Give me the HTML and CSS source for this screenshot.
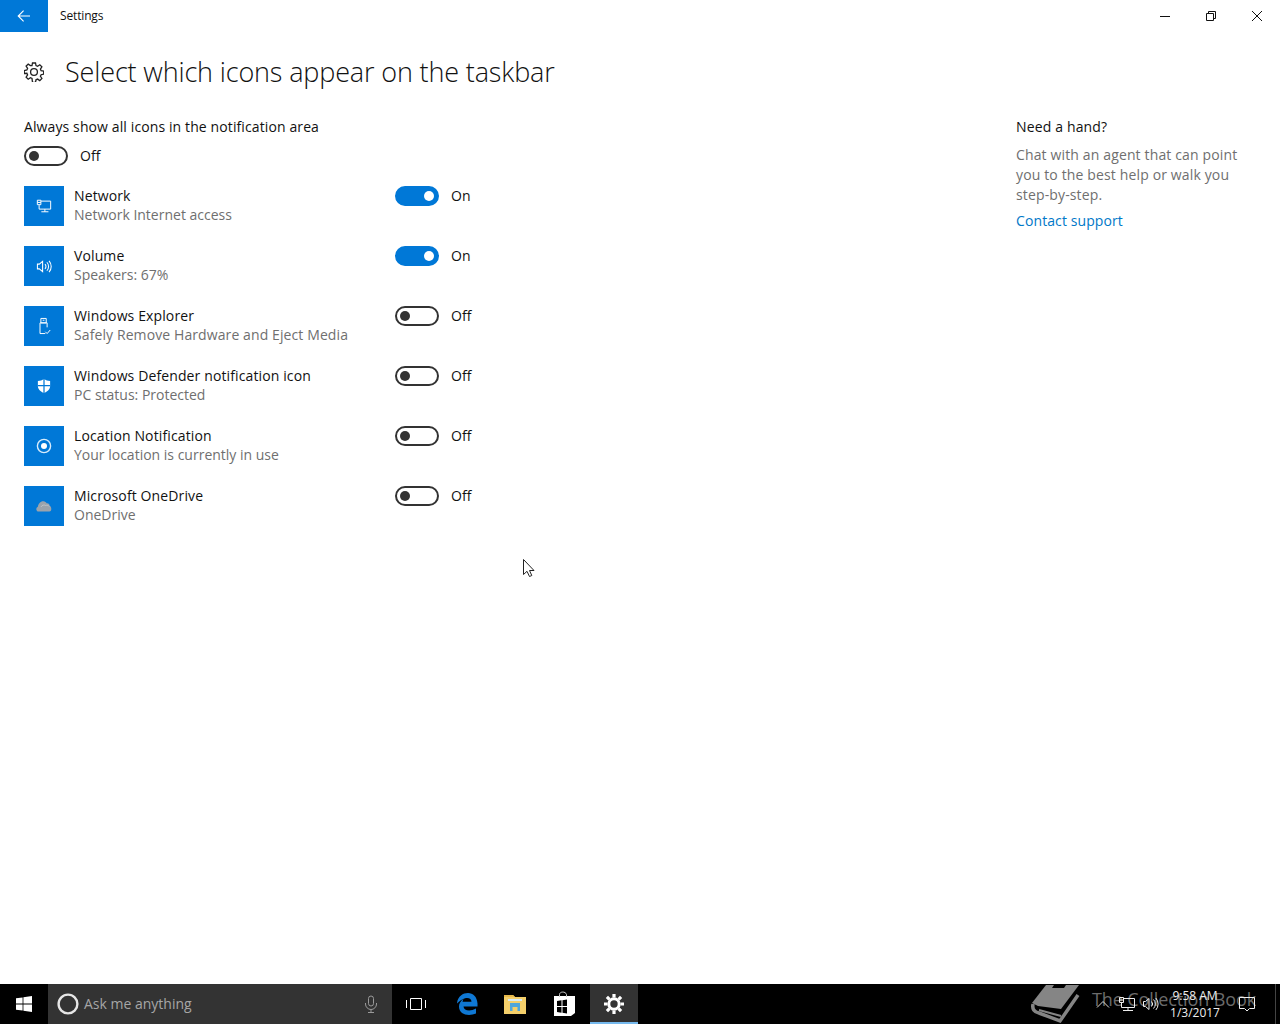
FILE: index.html
```html
<!DOCTYPE html>
<html lang="en">
<head>
<meta charset="utf-8">
<title>Settings</title>
<link rel="stylesheet" href="styles.css">
</head>
<body>
<div class="window">
  <header class="titlebar">
    <div class="back"><svg width="16" height="16" viewBox="0 0 16 16" fill="none" stroke="#fff" stroke-width="1.1"><path d="M14 8H2.2M7.6 2.600 2.200 8l5.400 5.400"/></svg></div>
    <div class="app-name">Settings</div>
    <div class="caption">
      <div class="cap-btn"><svg width="12" height="12" viewBox="0 0 12 12" fill="none" stroke="#111"><path d="M1 6.500h10"/></svg></div>
      <div class="cap-btn"><svg width="12" height="12" viewBox="0 0 12 12" fill="none" stroke="#111"><path d="M1.500 3.500h7v7h-7zM3.500 3.500v-2h7v7h-2"/></svg></div>
      <div class="cap-btn"><svg width="12" height="12" viewBox="0 0 12 12" fill="none" stroke="#111"><path d="M1 1l10 10M11 1 1 11"/></svg></div>
    </div>
  </header>

  <main class="content">
    <div class="page-head">
      <svg class="gear" width="20" height="20" viewBox="0 0 20 20" fill="none" stroke="#222" stroke-width="1.3"><path d="M8.500 1h3l.5 2.600 1.600.7 2.200-1.500 2.100 2.100-1.500 2.200.7 1.600 2.600.5v3l-2.600.5-.7 1.600 1.500 2.200-2.100 2.100-2.200-1.500-1.600.7-.5 2.600h-3L8 16.400l-1.600-.7-2.200 1.500-2.100-2.100 1.500-2.200-.7-1.600L.3 11.500v-3l2.600-.5.7-1.600-1.500-2.200 2.100-2.100 2.200 1.500L8 3.600z"/><circle cx="10" cy="10" r="3.400"/></svg>
      <h1 class="page-title">Select which icons appear on the taskbar</h1>
    </div>
    <div class="columns">
      <section class="settings">
        <div class="master-label">Always show all icons in the notification area</div>
        <div class="master-toggle"><span class="switch"></span><span class="state">Off</span></div>
        <div class="rows">
          <div class="row">
            <div class="tile"><svg width="16" height="16" viewBox="0 0 18 18" fill="none" stroke="#fff" stroke-width="1.100"><path d="M5.500 3.500h11v9h-13V8M10 12.500v3M6 15.500h8"/><path d="M1.500 2.500h4v5h-4zM1.500 5h4"/></svg></div>
            <div class="names"><div class="name">Network</div><div class="sub">Network Internet access</div></div>
            <div class="control"><span class="switch on"></span><span class="state">On</span></div>
          </div>
          <div class="row">
            <div class="tile"><svg width="17" height="17" viewBox="0 0 18 18" fill="none" stroke="#fff" stroke-width="1.100"><path d="M1.500 6.500h2l3.500-3v11l-3.500-3h-2zM9.500 6.500a3.500 3.500 0 0 1 0 5M11.500 4.500a6.500 6.500 0 0 1 0 9M13.800 3a9 9 0 0 1 0 12"/></svg></div>
            <div class="names"><div class="name">Volume</div><div class="sub">Speakers: 67%</div></div>
            <div class="control"><span class="switch on"></span><span class="state">On</span></div>
          </div>
          <div class="row">
            <div class="tile"><svg width="16" height="18" viewBox="0 0 18 20" fill="none" stroke="#fff" stroke-width="1.100"><path d="M5.500 1.500h6v5h-6zM4.500 6.500h8v5M4.500 6.500v12h6M10.500 16.500l2 2 3.500-4"/><path d="M7.500 3.500h2"/></svg></div>
            <div class="names"><div class="name">Windows Explorer</div><div class="sub sub-wide">Safely Remove Hardware and Eject Media</div></div>
            <div class="control"><span class="switch"></span><span class="state">Off</span></div>
          </div>
          <div class="row">
            <div class="tile"><svg width="14" height="16" viewBox="0 0 16 18"><path fill="#fff" d="M8 1c2 1.400 4.300 2.200 7 2.300V9c0 3.600-3 6.600-7 8-4-1.400-7-4.400-7-8V3.300C3.700 3.200 6 2.400 8 1z"/><path stroke="#0078d7" stroke-width="1.400" d="M8 1v16M1 8.500h14"/></svg></div>
            <div class="names"><div class="name">Windows Defender notification icon</div><div class="sub">PC status: Protected</div></div>
            <div class="control"><span class="switch"></span><span class="state">Off</span></div>
          </div>
          <div class="row">
            <div class="tile"><svg width="16" height="16" viewBox="0 0 16 16" fill="none" stroke="#d8ecfb" stroke-width="1.400"><circle cx="8" cy="8" r="6.600"/><circle cx="8" cy="8" r="3" fill="#fff" stroke="none"/></svg></div>
            <div class="names"><div class="name">Location Notification</div><div class="sub">Your location is currently in use</div></div>
            <div class="control"><span class="switch"></span><span class="state">Off</span></div>
          </div>
          <div class="row">
            <div class="tile"><svg width="16" height="12" viewBox="0 0 16 12"><path fill="#9ba3ab" d="M2.500 11.500C0 11.500-.5 7.800 1.800 7 2.300 3.500 4.500 1 7.500 1.200c1.500.1 2.600.9 3.100 2.100 1.800-.3 3 .8 3.100 2.500 2 .6 2.300 5.700-.2 5.700z"/><path fill="none" stroke="#c4c8cc" stroke-width=".8" d="M5 7c1-2 3-2.500 4.500-1.500 1.500-.5 3-.2 3.800 1"/></svg></div>
            <div class="names"><div class="name">Microsoft OneDrive</div><div class="sub">OneDrive</div></div>
            <div class="control"><span class="switch"></span><span class="state">Off</span></div>
          </div>
        </div>
      </section>
      <aside class="help">
        <div class="help-title">Need a hand?</div>
        <p class="help-text">Chat with an agent that can point you to the best help or walk you step-by-step.</p>
        <div class="help-link">Contact support</div>
      </aside>
    </div>
    <svg class="cursor" width="14" height="20" viewBox="0 0 14 20"><path fill="#fff" stroke="#222" d="M1.500 1.500v15l3.500-3.200 2.500 5.200 2.300-1-2.300-5h4.500z"/></svg>
  </main>

  <footer class="taskbar">
    <div class="start"><svg width="16" height="16" viewBox="0 0 16 16" fill="#fff"><path d="M0 2.300 6.600 1.400v6.200H0zM7.400 1.300 16 0v7.600H7.400zM0 8.400h6.600v6.200L0 13.700zM7.400 8.400H16V16l-8.600-1.300z"/></svg></div>
    <div class="search">
      <svg width="22" height="22" viewBox="0 0 22 22" fill="none" stroke="#e6e6e6" stroke-width="2.400"><circle cx="11" cy="11" r="9.400"/></svg>
      <span class="search-text">Ask me anything</span>
      <svg class="mic" width="14" height="18" viewBox="0 0 14 18" fill="none" stroke="#9a9a9a"><rect x="4.500" y="1" width="5" height="10" rx="2.500"/><path d="M1.500 8v1a5.500 5.500 0 0 0 11 0V8M7 14.500v3M4 17.500h6"/></svg>
    </div>
    <div class="task-btn"><svg width="20" height="14" viewBox="0 0 20 14" fill="none" stroke="#fff"><path d="M4.500 1.500h11v11h-11zM.5 3v8M19.500 3v8"/></svg></div>
    <div class="task-btn edge"><svg width="22" height="24" viewBox="0 0 22 24"><path fill="#0f78d4" d="M1 11C2 4 7 1 12 1c5 0 9 3.500 9.500 10.500v3H7.500c.3 4.500 7 5.200 12.500 2v5c-7 3-17 1.500-17-7 0-3 1.500-5.500 4.500-7.500-.5 1-.8 1.800-1 2.800h9c0-4.500-6.500-6.500-14.500 1.700z"/></svg></div>
    <div class="task-btn"><svg width="22" height="20" viewBox="0 0 22 20"><path fill="#f4cf6a" d="M0 1h9l2 2h11v17H0z"/><path fill="#e6b84a" d="M0 1h9l2 2H0z"/><path fill="#4fa6dc" d="M6 9h10v8h-2.500v-4h-5v4H6z"/><path fill="#d7eaf5" d="M4 5h14v2H4z"/></svg></div>
    <div class="task-btn store"><svg width="21" height="26" viewBox="0 0 21 26"><path fill="#fff" d="M0 5h21v17l-4 3H0z"/><path fill="none" stroke="#ccc" d="M5.500 6V3.500c0-3 6-3.500 7 0V6"/><path fill="#000" d="M3 10l4.500-.7V15H3zM8.500 9.200 13 8.500V15H8.500zM3 16h4.500v5.700L3 21zM8.500 16H13v6.500l-4.500-.7z"/></svg></div>
    <div class="task-btn active"><svg width="20" height="20" viewBox="0 0 20 20" fill="none" stroke="#fff" stroke-width="3"><circle cx="10" cy="10" r="5.200"/><path stroke-width="3.200" d="M10 0v3.500M10 16.500V20M0 10h3.500M16.500 10H20M2.900 2.900l2.500 2.500M14.600 14.600l2.500 2.500M2.900 17.100l2.500-2.500M14.600 5.400l2.500-2.500"/></svg></div>
    <div class="tray">
      <svg class="tray-chev" width="14" height="8" viewBox="0 0 14 8" fill="none" stroke="#ddd"><path d="M1 7.500l6-6 6 6"/></svg>
      <svg class="tray-icon" width="18" height="18" viewBox="0 0 18 18" fill="none" stroke="#eee"><path d="M5.500 3.500h11v9h-13V8M10 12.500v3M5 15.500h10"/><path d="M1.500 2.500h4v5h-4zM1.500 5h4"/></svg>
      <svg class="tray-icon" width="18" height="18" viewBox="0 0 18 18" fill="none" stroke="#eee"><path d="M1.500 6.500h2l3.500-3v11l-3.500-3h-2zM9.500 6.500a3.500 3.500 0 0 1 0 5M11.500 4.500a6.500 6.500 0 0 1 0 9M13.800 3a9 9 0 0 1 0 12"/></svg>
      <div class="clock"><div>9:58 AM</div><div>1/3/2017</div></div>
      <svg class="action" width="18" height="18" viewBox="0 0 18 18" fill="none" stroke="#eee"><path d="M1.500 2.500h15v11h-5L9 16l-2.500-2.500h-5z"/></svg>
      <div class="desk-line"></div>
    </div>
    <div class="watermark">
      <svg width="52" height="40" viewBox="0 0 52 40"><path fill="#858585" d="M2 19 16 1h33L31 25 8 22z"/><path fill="#000" d="M24 1h12l-2 3H22z"/><path fill="none" stroke="#858585" stroke-width="3.500" d="M3 20c-1 5 1 8 6 9l21 8 18-26"/><path fill="none" stroke="#858585" stroke-width="2" d="M9 26l22 6"/></svg>
      <span class="wm-text">The Collection Book</span>
    </div>
  </footer>
</div>
</body>
</html>
```

FILE: styles.css
```css
* { box-sizing: border-box; }
html, body { margin: 0; padding: 0; }
body {
  font-family: "Open Sans", "Noto Sans", "Liberation Sans", sans-serif;
  color: #000;
  background: #fff;
  overflow: hidden;
}
.window { width: 1280px; height: 1024px; display: flex; flex-direction: column; }

.titlebar { height: 32px; display: flex; align-items: center; flex: none; }
.back { width: 48px; height: 32px; background: #0078d7; display: flex; align-items: center; justify-content: center; }
.app-name { margin: -2px 0 0 12px; font-size: 12px; color: #111; letter-spacing: -0.15px; }
.caption { margin-left: auto; display: flex; }
.cap-btn { width: 46px; height: 32px; display: flex; align-items: center; justify-content: center; }

.content { flex: 1; position: relative; padding: 0 24px; min-height: 0; }
.page-head { display: flex; align-items: center; height: 80px; }
.gear { flex: none; }
.page-title { margin: -2px 0 0 21px; font-size: 27px; font-weight: 300; color: #111; white-space: nowrap; letter-spacing: -0.15px; }

.columns { display: flex; justify-content: space-between; }
.settings { width: 600px; }
.master-label { font-size: 14px; line-height: 20px; height: 20px; margin-top: 5px; color: #111; letter-spacing: 0.11px; }
.master-toggle { display: flex; align-items: center; margin-top: 9px; height: 20px; }
.master-toggle .state { margin-left: 12px; }
.rows { margin-top: 20px; display: flex; flex-direction: column; gap: 20px; }
.row { display: flex; height: 40px; }
.tile { width: 40px; height: 40px; background: #0078d7; display: flex; align-items: center; justify-content: center; flex: none; }
.names { width: 321px; margin-left: 10px; }
.name { font-size: 14px; line-height: 19px; color: #111; white-space: nowrap; letter-spacing: 0.12px; }
.sub { font-size: 14px; line-height: 19px; color: #6f6f6f; white-space: nowrap; }
.sub-wide { letter-spacing: 0.1px; }
.control { display: flex; align-items: center; height: 20px; }
.state { margin: -2px 0 0 12px; font-size: 14px; color: #111; }
.switch { display: block; position: relative; width: 44px; height: 20px; border: 2px solid #333; border-radius: 10px; flex: none; }
.switch::after { content: ""; position: absolute; left: 3px; top: 3px; width: 10px; height: 10px; border-radius: 50%; background: #333; }
.switch.on { background: #0078d7; border-color: #0078d7; }
.switch.on::after { left: auto; right: 3px; background: #fff; }

.help { width: 240px; margin-right: 0; }
.help-title { font-size: 14px; line-height: 20px; margin-top: 5px; color: #111; letter-spacing: 0.15px; }
.help-text { margin: 8px 0 0; font-size: 14px; line-height: 20px; color: #6f6f6f; letter-spacing: 0.14px; }
.help-link { margin-top: 6px; font-size: 14px; line-height: 20px; color: #0078c8; letter-spacing: 0.1px; }

.cursor { position: absolute; left: 522px; top: 526px; }

.taskbar { height: 40px; flex: none; background: #000; display: flex; position: relative; color: #fff; }
.start { width: 48px; display: flex; align-items: center; justify-content: center; }
.search { width: 344px; background: #333; display: flex; align-items: center; padding: 0 14px 0 9px; }
.search-text { margin: -2px 0 0 5px; font-size: 14px; color: #a6a6a6; }
.mic { margin-left: auto; }
.task-btn { width: 48px; height: 40px; display: flex; align-items: center; justify-content: center; }
.task-btn.edge { margin-left: 3px; }
.task-btn.store { margin-left: 1px; }
.task-btn.active { background: #333; border-bottom: 2px solid #76b9ed; margin-left: 2px; padding-top: 2px; }
.tray { margin-left: auto; display: flex; align-items: center; position: relative; z-index: 1; }
.tray-chev { margin-right: 8px; }
.tray-icon { margin-right: 6px; }
.tray-icon + .tray-icon { margin-right: -1px; }
.clock { width: 72px; text-align: center; font-size: 12px; line-height: 17px; color: #eee; white-space: nowrap; }
.action { margin: 0 24px 0 7px; }
.desk-line { width: 1px; height: 40px; background: #444; position: absolute; right: 4px; top: 0; }
.watermark { position: absolute; left: 1030px; top: 0; height: 40px; display: flex; align-items: flex-start; overflow: hidden; }
.wm-text { margin: 1px 0 0 10px; font-size: 18px; line-height: 28px; color: #6b6b6b; white-space: nowrap; letter-spacing: -0.1px; }
```
